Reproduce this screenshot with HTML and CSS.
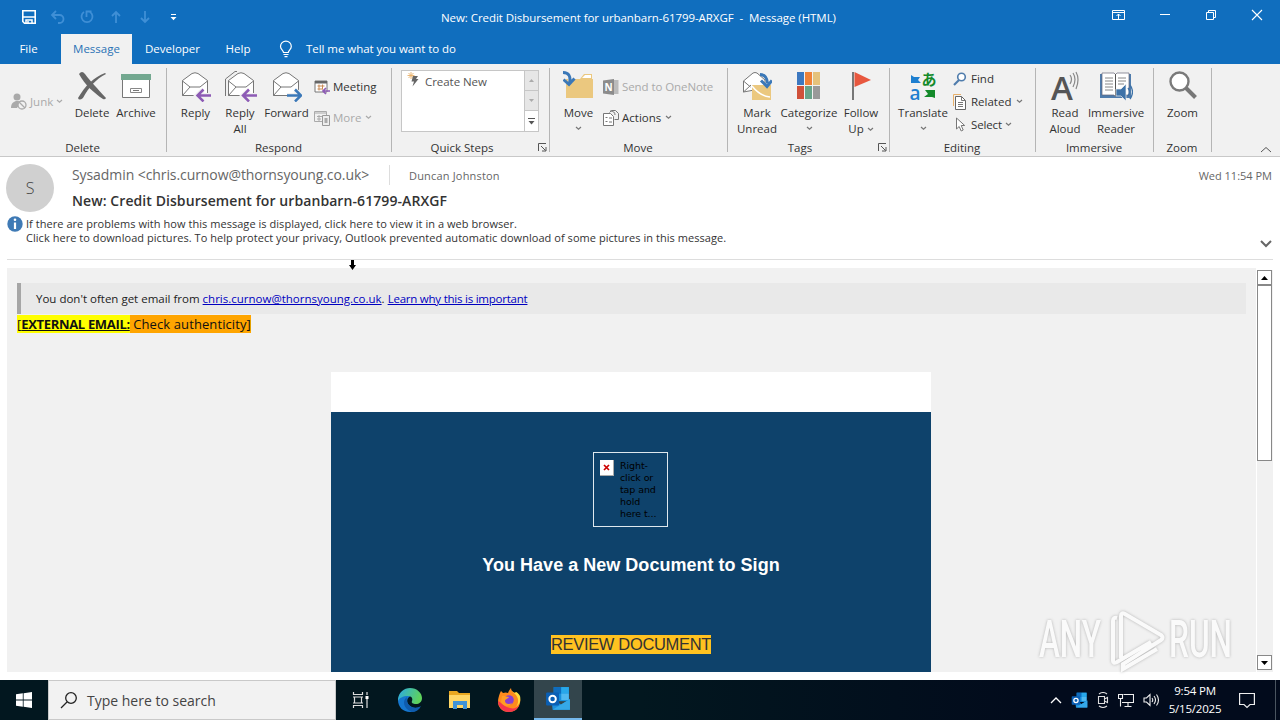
FILE: index.html
```html
<!DOCTYPE html>
<html>
<head>
  <meta charset="utf-8">
  <title>New: Credit Disbursement for urbanbarn-61799-ARXGF - Message (HTML)</title>
  <link rel="stylesheet" href="styles.css">
</head>
<body>
  <!-- icons used more than once -->
  <svg class="defs" width="0" height="0">
    <symbol id="caret" viewBox="0 0 7 5"><path d="M1 1l2.500 2.300L6 1" fill="none" stroke="currentColor" stroke-width="1.200"/></symbol>
    <symbol id="launcher" viewBox="0 0 9 9"><path d="M.5 8V.5H8M3 3l4.500 4.500M8 4v4H4" fill="none" stroke="#555"/></symbol>
    <symbol id="envelope" viewBox="0 0 28 28"><path d="M1.500 9.500L11 2.500q3-1.500 6 0l9.500 7v15h-25z" fill="#fff" stroke="#777"/><path d="M1.500 10l7.500 6h10l7.500-6M1.500 24.500L9 16" fill="none" stroke="#777"/></symbol>
    <symbol id="outlook" viewBox="0 0 24 24"><rect x="8" y="1" width="14" height="13" fill="#1490df"/><path d="M8 1h7v6H8z" fill="#0f6cbd"/><path d="M15 1h7v6h-7z" fill="#28a8ea"/><path d="M15 7h7v6h-7z" fill="#50b9f0"/><path d="M6 12l9 5 8-5v10H7z" fill="#1d8fdc"/><path d="M23 12v10H7z" fill="#35a8e8"/><rect x="1" y="6" width="12" height="12" rx="1" fill="#0a5fb4"/><circle cx="7" cy="12" r="3" fill="none" stroke="#fff" stroke-width="1.800"/></symbol>
  </svg>

  <div class="titlebar">
    <div class="quick-access">
      <svg width="16" height="16" viewBox="0 0 16 16"><path d="M1.800 1.800h12.400v12.400H3.500L1.800 12.500z" fill="none" stroke="#fff" stroke-width="1.600"/><path d="M2 8h12M5 14v-3h6v3M7 12v2" fill="none" stroke="#fff" stroke-width="1.500"/></svg>
      <svg class="dim" width="16" height="16" viewBox="0 0 16 16"><path d="M6 2L2 6l4 4M2 6h7.500a4 4 0 0 1 0 8H8" fill="none" stroke="currentColor" stroke-width="1.800"/></svg>
      <svg class="dim" width="16" height="16" viewBox="0 0 16 16"><path d="M5 3a5.500 5.500 0 1 0 6 0M7.500 8V2.500h5" fill="none" stroke="currentColor" stroke-width="1.800"/></svg>
      <svg class="dim" width="16" height="16" viewBox="0 0 16 16"><path d="M8 14V3M4 7l4-4 4 4" fill="none" stroke="currentColor" stroke-width="1.800"/></svg>
      <svg class="dim" width="16" height="16" viewBox="0 0 16 16"><path d="M8 2v11M4 9l4 4 4-4" fill="none" stroke="currentColor" stroke-width="1.800"/></svg>
      <svg width="16" height="16" viewBox="0 0 16 16"><path d="M5 5.500h5" stroke="#fff"/><path d="M4.500 8h6l-3 3.200z" fill="#fff"/></svg>
    </div>
    <div class="window-title">New: Credit Disbursement for urbanbarn-61799-ARXGF&nbsp; -&nbsp; Message (HTML)</div>
    <div class="window-buttons">
      <svg width="14" height="12" viewBox="0 0 14 12"><path d="M.5 1.500h12v9H.5zM.5 3.500h12M6.500 10V5M4.500 7l2-2 2 2" fill="none" stroke="#fff"/></svg>
      <svg width="12" height="12" viewBox="0 0 12 12"><path d="M1 5.500h10" stroke="#fff"/></svg>
      <svg width="12" height="12" viewBox="0 0 12 12"><path d="M1.500 3.500h7v7h-7zM3.500 3.500v-2h7v7h-2" fill="none" stroke="#fff"/></svg>
      <svg width="12" height="12" viewBox="0 0 12 12"><path d="M1 1l10 10M11 1L1 11" stroke="#fff" stroke-width="1.100"/></svg>
    </div>
  </div>

  <div class="tabs">
    <div class="tab tab-file">File</div>
    <div class="tab active">Message</div>
    <div class="tab tab-dev">Developer</div>
    <div class="tab tab-help">Help</div>
    <svg class="bulb" width="14" height="18" viewBox="0 0 14 18"><path d="M4.500 12.500c0-2-3-3-3-6a5.300 5.300 0 0 1 10.800 0c0 3-3 4-3 6zM4.500 14.500h5M5.500 16.700h3" fill="none" stroke="#fff" stroke-width="1.200"/></svg>
    <div class="tell-me">Tell me what you want to do</div>
  </div>

  <div class="ribbon">
    <div class="group g-delete">
      <div class="group-body">
        <div class="junk disabled">
          <svg width="16" height="17" viewBox="0 0 16 17"><circle cx="6" cy="4" r="3.500" fill="#aaa"/><path d="M0 15c0-5 3-7 6-7 2 0 3 .5 4 1l-4 6z" fill="#aaa"/><circle cx="11" cy="12" r="4" fill="#f1f1f1" stroke="#aaa" stroke-width="1.300"/><path d="M8 9l6 6" stroke="#aaa" stroke-width="1.300"/></svg>
          <span>Junk</span><svg class="caret" width="7" height="5"><use href="#caret"/></svg>
        </div>
        <div class="big w44">
          <svg width="30" height="32" viewBox="0 0 30 32"><path d="M2 4q3-4 6 0c6 8 12 14 21 24q-1 2-3 1C17 23 8 15 2 4z" fill="#666"/><path d="M29 4C19 9 12 17 6 28q-4 3-5 0C8 16 17 7 28 3z" fill="#666"/></svg>
          <span>Delete</span>
        </div>
        <div class="big w44">
          <svg width="30" height="32" viewBox="0 0 30 32"><path d="M1.500 9h27v18.500h-27z" fill="#fff" stroke="#777"/><path d="M0 4h30v6H0z" fill="#73a890"/><path d="M9.500 18.500h11v4h-11z" fill="#fff" stroke="#888"/><path d="M12 20.500h6" stroke="#777"/></svg>
          <span>Archive</span>
        </div>
      </div>
      <div class="group-label">Delete</div>
    </div>

    <div class="group g-respond">
      <div class="group-body">
        <div class="big w45">
          <svg width="30" height="32" viewBox="0 0 30 32"><use href="#envelope" x="0" y="1" width="28" height="28"/><path d="M30 25.500H17M22 20l-6 5.500 6 5.500" fill="none" stroke="#f1f1f1" stroke-width="5"/><path d="M31 25.500H17M22.500 19.500l-6 6 6 6" fill="none" stroke="#8d5bb5" stroke-width="2.500"/></svg>
          <span>Reply</span>
        </div>
        <div class="big w44">
          <svg width="33" height="32" viewBox="0 0 33 32"><path d="M1.500 26V9L11 1.500h2" fill="none" stroke="#777"/><use href="#envelope" x="3" y="1" width="28" height="28"/><path d="M32 25.500H19M25 20l-6 5.500 6 5.500" fill="none" stroke="#f1f1f1" stroke-width="5"/><path d="M33 25.500H19M25 19.500l-6 6 6 6" fill="none" stroke="#8d5bb5" stroke-width="2.500"/></svg>
          <span>Reply<br>All</span>
        </div>
        <div class="big w49">
          <svg width="30" height="32" viewBox="0 0 30 32"><use href="#envelope" x="0" y="1" width="28" height="28"/><path d="M15 25.500h13M23 20l6 5.500-6 5.500" fill="none" stroke="#f1f1f1" stroke-width="5"/><path d="M15 25.500h13M23 19.500l6 6-6 6" fill="none" stroke="#3b78b8" stroke-width="2.500"/></svg>
          <span>Forward</span>
        </div>
        <div class="small-col two">
          <div class="small">
            <svg width="16" height="16" viewBox="0 0 16 16"><path d="M1 2h12v11H1z" fill="#fff" stroke="#777"/><path d="M1 2h12v2.500H1z" fill="#666"/><path d="M3.500 7h7M3.500 10h5M5 5.500v6M8.500 5.500v5" stroke="#c98a55"/><path d="M16 12H9M12 9l-3 3 3 3" fill="none" stroke="#8d5bb5" stroke-width="1.700"/></svg>
            <span>Meeting</span>
          </div>
          <div class="small disabled">
            <svg width="16" height="16" viewBox="0 0 16 16"><path d="M.5 1.500h12v10H.5z" fill="none" stroke="#aaa"/><path d="M.5 3h12M3 6.500h5M3 9h4M5 5v6" stroke="#aaa"/><path d="M8.500 5.500h7v10h-7z" fill="#eee" stroke="#999"/><path d="M10.500 8h3v5h-3z" fill="#aaa"/></svg>
            <span>More</span><svg class="caret" width="7" height="5"><use href="#caret"/></svg>
          </div>
        </div>
      </div>
      <div class="group-label">Respond</div>
    </div>

    <div class="group g-quick">
      <div class="group-body">
        <div class="gallery">
          <div class="gallery-list">
            <svg width="13" height="17" viewBox="0 0 13 17"><path d="M4 1v7M.5 4.500h7M1.500 2l5 5M6.500 2l-5 5" stroke="#e8b06a" stroke-width=".9"/><path d="M6 5h5L9 8h2.500L5.500 15.500 7 10.500H4.500z" fill="#666"/></svg>
            <span>Create New</span>
          </div>
          <div class="gallery-scroll">
            <div class="g-btn off"><svg width="5" height="3"><path d="M0 3h5L2.500 0z" fill="#aaa"/></svg></div>
            <div class="g-btn off"><svg width="5" height="3"><path d="M0 0h5L2.500 3z" fill="#aaa"/></svg></div>
            <div class="g-btn"><svg width="7" height="7"><path d="M0 .5h7" stroke="#555"/><path d="M.5 3h6l-3 3.500z" fill="#555"/></svg></div>
          </div>
        </div>
      </div>
      <div class="group-label">Quick Steps</div>
      <svg class="launcher" width="9" height="9"><use href="#launcher"/></svg>
    </div>

    <div class="group g-move">
      <div class="group-body">
        <div class="big w45">
          <svg width="31" height="32" viewBox="0 0 31 32"><path d="M3 9h14l4-5h8v5h1v19H3z" fill="#ebc87f"/><path d="M19 8l3-3h6v3z" fill="#fff"/><path d="M0 0c7-1 10 4 7 12" fill="none" stroke="#f1f1f1" stroke-width="5"/><path d="M0 2.500c6 0 8 4 6.500 11M.5 9.500l5.500 5 5.500-6" fill="none" stroke="#3b78b8" stroke-width="3"/></svg>
          <span>Move</span><svg class="caret" width="7" height="5"><use href="#caret"/></svg>
        </div>
        <div class="small-col two">
          <div class="small disabled">
            <svg width="16" height="16" viewBox="0 0 16 16"><path d="M9 1h6.500v14H9z" fill="#bbb"/><path d="M0 1.500L11 0v16L0 14.500z" fill="#8c8c8c"/><text class="n-mark" x="1.500" y="12">N</text></svg>
            <span class="onenote">Send to OneNote</span>
          </div>
          <div class="small">
            <svg width="16" height="16" viewBox="0 0 16 16"><path d="M.5 3.500h7l3 3v9H.5z" fill="#fff" stroke="#777"/><path d="M2.500 7.500h2M2.500 11.500h2M6 8h3M6 12h3" stroke="#777"/><path d="M6.500 2.500l2-2h4l3 3v6h-4M7 1q5 0 5 4" fill="none" stroke="#777"/></svg>
            <span>Actions</span><svg class="caret" width="7" height="5"><use href="#caret"/></svg>
          </div>
        </div>
      </div>
      <div class="group-label">Move</div>
    </div>

    <div class="group g-tags">
      <div class="group-body">
        <div class="big w46">
          <svg width="30" height="32" viewBox="0 0 30 32"><path d="M1.500 22V11L11 3q2-1 4 0l8 7v8z" fill="#fff" stroke="#777"/><path d="M1.500 11l7 6M1.500 22L9 15" fill="none" stroke="#777"/><path d="M10 15h19v15H10z" fill="#ebc87f"/><path d="M10 16q8 10 18 11" fill="none" stroke="#fff" stroke-width="1.500"/><path d="M18 4.500q7 0 7.500 9M19 10.500l6 6 5-6" fill="none" stroke="#3b78b8" stroke-width="3"/></svg>
          <span>Mark<br>Unread</span>
        </div>
        <div class="big w58">
          <svg width="24" height="32" viewBox="0 0 24 32"><path d="M0 2h7v13H0z" fill="#3c78c0"/><path d="M8 2h7v13H8z" fill="#ef8238"/><path d="M16 2h7v13h-7z" fill="#e5c27b"/><path d="M0 16h7v13H0z" fill="#cf5039"/><path d="M8 16h7v13H8z" fill="#68a389"/><path d="M16 16h7v13h-7z" fill="#999"/></svg>
          <span>Categorize</span><svg class="caret" width="7" height="5"><use href="#caret"/></svg>
        </div>
        <div class="big w46">
          <svg width="20" height="32" viewBox="0 0 20 32"><path d="M2 2v28" stroke="#777" stroke-width="2"/><path d="M3.500 2L20 10 3.500 17z" fill="#e8583f"/></svg>
          <span>Follow<br>Up <svg class="caret" width="7" height="5"><use href="#caret"/></svg></span>
        </div>
      </div>
      <div class="group-label">Tags</div>
      <svg class="launcher" width="9" height="9"><use href="#launcher"/></svg>
    </div>

    <div class="group g-editing">
      <div class="group-body">
        <div class="big w54">
          <div class="translate-icon">
            <svg width="11" height="9" viewBox="0 0 11 9"><path d="M1 0l3 2h6L8 5l3 3H1z" fill="#1e7fd0"/></svg>
            <b class="hira">あ</b>
            <b class="lat">a</b>
            <svg width="12" height="9" viewBox="0 0 12 9"><path d="M12 9l-3-1H1l4-3-3-4h10z" fill="#148a2a"/></svg>
          </div>
          <span>Translate</span><svg class="caret" width="7" height="5"><use href="#caret"/></svg>
        </div>
        <div class="small-col three">
          <div class="small">
            <svg width="14" height="14" viewBox="0 0 14 14"><circle cx="8.500" cy="5" r="3.800" fill="#fff" stroke="#4f7cac" stroke-width="1.600"/><path d="M6 8l-5 5" stroke="#4f7cac" stroke-width="2.200"/></svg>
            <span>Find</span>
          </div>
          <div class="small">
            <svg width="14" height="16" viewBox="0 0 14 16"><path d="M.5 12V.5H8" fill="none" stroke="#e8b06a"/><path d="M2.500 2.500h6l4 4v9h-10z" fill="#fff" stroke="#666"/><path d="M8.500 2.500v4h4M5 8.500h5M5 10.500h5M5 12.500h5" fill="none" stroke="#777"/></svg>
            <span>Related</span><svg class="caret" width="7" height="5"><use href="#caret"/></svg>
          </div>
          <div class="small">
            <svg width="14" height="15" viewBox="0 0 14 15"><path d="M3.500 1v11l2.700-2.500 2 4.500 2-1-2-4.500h3.500z" fill="#fff" stroke="#777"/></svg>
            <span class="select">Select</span><svg class="caret caret-select" width="7" height="5"><use href="#caret"/></svg>
          </div>
        </div>
      </div>
      <div class="group-label">Editing</div>
    </div>

    <div class="group g-immersive">
      <div class="group-body">
        <div class="big w46">
          <svg width="30" height="32" viewBox="0 0 30 32"><text class="a-mark" x="1" y="30">A</text><path d="M20 5q3 4 0 9M23 3q4 6 0 14M26 2q4 7 0 17" fill="none" stroke="#888" stroke-width="1.200"/></svg>
          <span>Read<br>Aloud</span>
        </div>
        <div class="big w56">
          <svg width="33" height="32" viewBox="0 0 33 32"><path d="M0 4h31v24H0z" fill="#4f7cac"/><path d="M2 3h12l1.500 1.500L17 3h12v22H17l-1.500 1.500L14 25H2z" fill="#fff" stroke="#667" stroke-width=".7"/><path d="M15.500 4v22" stroke="#555"/><path d="M5 8h8M5 11h8M5 14h8M5 17h8M5 20h8M18 8h8M18 11h8M18 14h6" stroke="#888"/><path d="M16 19h5l5-5v17l-5-5h-5z" fill="#3d72a8" stroke="#f1f1f1" stroke-width=".7"/><path d="M28 18q3 4 0 8M30 15q5 7 0 14" fill="none" stroke="#3d72a8" stroke-width="1.300"/></svg>
          <span>Immersive<br>Reader</span>
        </div>
      </div>
      <div class="group-label">Immersive</div>
    </div>

    <div class="group g-zoom">
      <div class="group-body">
        <div class="big w45">
          <svg width="28" height="32" viewBox="0 0 28 32"><circle cx="10.500" cy="11.500" r="9" fill="#fff" stroke="#7a7a7a" stroke-width="2.400"/><path d="M17 18l9.500 9.500" stroke="#777" stroke-width="4"/></svg>
          <span>Zoom</span>
        </div>
      </div>
      <div class="group-label">Zoom</div>
    </div>
    <svg class="collapse" width="12" height="7" viewBox="0 0 12 7"><path d="M1 6l5-4.500L11 6" fill="none" stroke="#555"/></svg>
  </div>

  <div class="mail-header">
    <div class="avatar">S</div>
    <div class="mail-meta">
      <div class="people">
        <div class="from">Sysadmin &lt;chris.curnow@thornsyoung.co.uk&gt;</div>
        <div class="to">Duncan Johnston</div>
        <div class="date">Wed 11:54 PM</div>
      </div>
      <div class="subject">New: Credit Disbursement for urbanbarn-61799-ARXGF</div>
    </div>
  </div>
  <div class="infobar">
    <svg width="16" height="16" viewBox="0 0 16 16"><circle cx="8" cy="8" r="7.700" fill="#3f7ab5"/><path d="M8 6.500V13" stroke="#fff" stroke-width="2.200"/><circle cx="8" cy="3.800" r="1.300" fill="#fff"/></svg>
    <div class="info-text">
      <div class="info1">If there are problems with how this message is displayed, click here to view it in a web browser.</div>
      <div class="info2">Click here to download pictures. To help protect your privacy, Outlook prevented automatic download of some pictures in this message.</div>
    </div>
    <svg class="expand" width="12" height="8" viewBox="0 0 12 8"><path d="M1 1l5 5 5-5" fill="none" stroke="#666" stroke-width="2"/></svg>
  </div>

  <div class="reading">
    <div class="mail-body">
      <div class="safety">You don't often get email from <a>chris.curnow@thornsyoung.co.uk</a>. <a class="learn">Learn why this is important</a></div>
      <div class="external"><span class="yellow">[<b>EXTERNAL EMAIL:</b></span><span class="orange"> Check authenticity]</span></div>
      <div class="card">
        <div class="card-main">
          <div class="blocked">
            <svg width="14" height="16" viewBox="0 0 14 16"><path d="M0 0h14v16H0z" fill="#aaa"/><path d="M0 0h13v15H0z" fill="#fff"/><path d="M4 5l5 5M9 5l-5 5" stroke="#c00" stroke-width="1.700"/></svg>
            <span>Right-<br>click or<br>tap and<br>hold<br>here t...</span>
          </div>
          <div class="headline">You Have a New Document to Sign</div>
          <div class="review"><span>REVIEW DOCUMENT</span></div>
        </div>
      </div>
    </div>
    <div class="scrollbar">
      <div class="sb-btn"><svg width="7" height="4"><path d="M0 4h7L3.500 0z"/></svg></div>
      <div class="thumb"></div>
      <div class="sb-btn sb-down"><svg width="7" height="4"><path d="M0 0h7L3.500 4z"/></svg></div>
    </div>
  </div>

  <div class="taskbar">
    <div class="start"><svg width="16" height="16" viewBox="0 0 16 16"><path d="M0 2.300L6.800 1.300v6.300H0zM7.600 1.200L16 0v7.600H7.600zM0 8.400h6.800v6.300L0 13.700zM7.600 8.400H16V16l-8.400-1.200z" fill="#fff"/></svg></div>
    <div class="search">
      <svg width="18" height="18" viewBox="0 0 18 18"><circle cx="11" cy="7" r="5.300" fill="none" stroke="#222" stroke-width="1.300"/><path d="M7 11l-6 6" stroke="#222" stroke-width="1.300"/></svg>
      <span>Type here to search</span>
    </div>
    <div class="task"><svg width="18" height="16" viewBox="0 0 18 16"><path d="M1.500 0v2.500h9V0M1.500 16v-2.500h9V16M1 5h10M1 11h10M2.500 5v6M9.500 5v6M15 0v3M15 7v9" fill="none" stroke="#ddd" stroke-width="1.200"/><path d="M13.500 4h3v3h-3z" fill="#fff"/></svg></div>
    <div class="task">
      <svg width="24" height="24" viewBox="0 0 24 24"><defs><linearGradient id="edge-top" x1="0" y1="0" x2="1" y2=".3"><stop offset="0" stop-color="#2aa9e8"/><stop offset="1" stop-color="#5ed25c"/></linearGradient></defs><path d="M0 12C1 6 5 4 9 5l4 3c-4 1-5 6-2 9 3 3 7 4 11 2-2 3-6 5-10 5C5 24 0 19 0 12z" fill="#1577cf"/><path d="M0 11C1 4 6 0 12 0c7 0 12 5 12 10 0 4-3 6-6 6-3 0-5-1-4-3 1-2 0-5-4-5-5 0-9 2-10 5z" fill="url(#edge-top)"/><path d="M9 9c-5 3-4 12 5 15 4 0 7-2 9-6-3 2-7 2-9 1-4-1-6-6-5-10z" fill="#0f5cad"/></svg>
    </div>
    <div class="task">
      <svg width="22" height="20" viewBox="0 0 22 20"><path d="M0 1h8l2 2h11v15H0z" fill="#e9a820"/><path d="M0 5h21v13H0z" fill="#ffd766"/><path d="M4 19v-8h14v8h-4v-4H8v4z" fill="#3f93d6"/></svg>
    </div>
    <div class="task">
      <svg width="24" height="24" viewBox="0 0 24 24"><path d="M3 5l1-2 2 2q3-1 5 0 1-3 3-5c0 3 2 4 4 5l1-1c3 3 5 6 4 11-1 5-5 9-11 9C5 24 1 19 1 14c0-4 1-6 2-9z" fill="#ff8a1d"/><path d="M14 0c0 3 2 4 4 6 4 4 4 9 1 13 4-3 5-7 4-11-1-2-2-3-4-4l-1 1c-2-1-4-2-4-5z" fill="#ffdc3e"/><path d="M1 13c0 6 5 11 11 11 5 0 9-3 10-7-2 3-5 4-9 3-5-1-7-4-12-7z" fill="#f5354c"/><circle cx="12" cy="12" r="4.800" fill="#8a3fd0"/><path d="M5 8c3-1 4 1 7 1-1 2-4 2-4 4 0 3 4 4 7 2-2 4-9 4-11-1z" fill="#ff9d25"/></svg>
    </div>
    <div class="task current"><svg width="26" height="26"><use href="#outlook"/></svg></div>
    <div class="tray">
      <svg width="12" height="8" viewBox="0 0 12 8"><path d="M1 7l5-5 5 5" fill="none" stroke="#fff" stroke-width="1.300"/></svg>
      <svg width="17" height="17"><use href="#outlook"/></svg>
      <svg width="12" height="16" viewBox="0 0 12 16"><path d="M1.500 4.500h6v7h-6zM7.500 7l3-1.500v5L7.500 9M2 2q4-3 8 0M2 14q4 3 8 0" fill="none" stroke="#ddd" stroke-width="1.100"/></svg>
      <svg width="16" height="15" viewBox="0 0 16 15"><path d="M5.500 1.500h10v8H4M10 9.500v4M6.500 13.500h7M.5 1.500h4v4h-4zM2.500 5.500v8" fill="none" stroke="#eee" stroke-width="1.100"/></svg>
      <svg width="17" height="14" viewBox="0 0 17 14"><path d="M1 5h2.500L7 1.500v11L3.500 9H1zM9 5q1.500 2 0 4M11 3q3 4 0 8M13.500 1.500q4 5.500 0 11" fill="none" stroke="#eee" stroke-width="1.100"/></svg>
    </div>
    <div class="clock"><div class="time">9:54 PM</div><div class="day">5/15/2025</div></div>
    <svg class="notify" width="16" height="17" viewBox="0 0 16 17"><path d="M.6 1.500h14.800v11H11l-3 3-3-3H.6z" fill="none" stroke="#eee" stroke-width="1.200"/></svg>
    <div class="peek"></div>
  </div>

  <svg class="pointer" width="8" height="10" viewBox="0 0 8 10"><path d="M3 0h3v5h2L4.500 10 1 5h2z"/></svg>

  <svg class="watermark" width="243" height="70" viewBox="0 0 243 70">
    <text x="2" y="50" textLength="62" lengthAdjust="spacingAndGlyphs">ANY</text>
    <path d="M80 11q-4-1-4 3v40q0 3 4 1l34-20M84 34V9q0-4 4-2l36 21q3 3 0 5L86 57v5l34-20M84 20v31" fill="none"/>
    <text x="132" y="50" textLength="63" lengthAdjust="spacingAndGlyphs">RUN</text>
  </svg>
</body>
</html>
```

FILE: styles.css
```css
* { box-sizing: border-box; }
body {
  margin: 0;
  width: 1280px;
  height: 720px;
  overflow: hidden;
  position: relative;
  display: flex;
  flex-direction: column;
  background: #fff;
  font-family: "Open Sans", "Noto Sans", sans-serif;
  font-size: 11.5px;
  color: #333;
}
svg { display: block; flex: none; }
.defs { position: absolute; }
span, div { white-space: nowrap; }

/* title bar */
.titlebar { height: 34px; background: #106ebe; color: #fff; display: flex; align-items: center; flex: none; }
.quick-access { display: flex; gap: 13px; padding-left: 21px; width: 441px; }
.dim { color: #3f8fd6; }
.window-title { flex: 1; letter-spacing: -.06px; }
.window-buttons { display: flex; gap: 34px; padding: 0 17px 4px 0; }
.window-buttons svg:first-child { margin-right: -1px; }

.tabs { height: 30px; background: #106ebe; color: #fff; display: flex; flex: none; align-items: center; }
.tab { height: 30px; line-height: 30px; text-align: center; }
.tab-file { width: 61px; padding-right: 4px; }
.active { width: 71px; background: #f1f1f1; color: #2a72b5; }
.tab-dev { width: 81px; }
.tab-help { width: 50px; }
.bulb { margin-left: 16px; }
.tell-me { margin: -1px 0 0 13px; letter-spacing: -.05px; }

/* ribbon */
.ribbon { height: 93px; background: #f1f1f1; border-bottom: 1px solid #c8c8c8; display: flex; flex: none; position: relative; }
.group { display: flex; flex-direction: column; position: relative; padding-left: 6px; }
.group::after { content: ""; position: absolute; right: 0; top: 4px; height: 84px; border-right: 1px solid #b5b5b5; }
.g-delete { width: 167px; padding-left: 0; }
.g-respond { width: 225px; }
.g-quick { width: 158px; }
.g-move { width: 178px; }
.g-tags { width: 162px; }
.g-editing { width: 146px; }
.g-immersive { width: 118px; }
.g-zoom { width: 58px; }
.group-body { height: 76px; display: flex; }
.group-label { line-height: 16px; text-align: center; margin-left: -6px; padding-right: 2px; }
.g-delete .group-label { margin-left: 0; }
.g-quick .group-label { padding-right: 18px; }
.g-tags .group-label { padding-right: 18px; }
.launcher { position: absolute; right: 3px; bottom: 4px; }

.big { display: flex; flex-direction: column; align-items: center; padding-top: 6px; }
.big > span { line-height: 16px; text-align: center; margin-top: 3px; }
.big > .caret { margin-top: 5px; }
.big span .caret { display: inline-block; vertical-align: middle; }
.caret { color: #777; }
.w44 { width: 44px; }
.w45 { width: 45px; }
.w46 { width: 46px; }
.w49 { width: 49px; }
.w54 { width: 54px; }
.w56 { width: 56px; }
.w58 { width: 58px; }

.disabled { color: #aaa; }
.disabled .caret { color: #aaa; }
.junk { width: 70px; padding: 0 0 2px 11px; display: flex; align-items: center; gap: 3px; }
.small-col { display: flex; flex-direction: column; padding-left: 3px; }
.small { display: flex; align-items: center; gap: 3px; }
.small .caret { margin-left: 1px; }
.two { padding-top: 7px; }
.two .small { height: 31px; }
.three { padding-top: 3px; }
.three .small { height: 23px; gap: 4px; }
.select { letter-spacing: -.15px; }
.small .caret-select { margin-left: -1px; }
.onenote { letter-spacing: -.08px; }
.n-mark { font: 700 10px "Open Sans", sans-serif; fill: #fff; }
.a-mark { font: 600 33px "Open Sans", sans-serif; fill: #555; }
.g-move .small-col { padding-left: 2px; }

.gallery { display: flex; width: 138px; height: 62px; margin: 6px 0 0 3px; border: 1px solid #c6c6c6; background: #fff; }
.gallery-list { flex: 1; display: flex; gap: 5px; padding-left: 5px; line-height: 22px; align-items: flex-start; color: #555; letter-spacing: -.05px; }
.gallery-scroll { width: 14px; border-left: 1px solid #c6c6c6; }
.g-btn { height: 20px; display: flex; align-items: center; justify-content: center; border-bottom: 1px solid #c6c6c6; }
.g-btn:last-child { border-bottom: 0; }
.off { background: #e6e6e6; }

.translate-icon { width: 28px; height: 32px; padding: 2px 0; display: grid; grid-template-columns: 12px 16px; grid-template-rows: 14px 14px; align-items: center; justify-items: center; }
.hira { font: 700 15px/14px "Noto Sans CJK JP", sans-serif; color: #148a2a; }
.lat { font-size: 19px; line-height: 14px; font-weight: 600; color: #1e7fd0; }
.collapse { position: absolute; right: 8px; bottom: 3px; }

/* message header */
.mail-header { display: flex; height: 59px; flex: none; padding: 7px 8px 0 6px; }
.avatar { width: 48px; height: 48px; border-radius: 50%; background: #d0d0d0; color: #444; font-size: 16px; font-weight: 300; line-height: 48px; text-align: center; }
.mail-meta { flex: 1; padding-left: 18px; }
.people { display: flex; height: 22px; align-items: center; color: #666; }
.from { width: 318px; font-size: 14px; letter-spacing: -.08px; border-right: 1px solid #ddd; line-height: 20px; }
.to { flex: 1; padding-left: 19px; font-size: 11px; letter-spacing: .18px; }
.date { font-size: 11px; }
.subject { font-size: 14px; font-weight: 600; line-height: 29px; letter-spacing: .08px; color: #333; }
.infobar { display: flex; height: 44px; flex: none; margin: 0 7px; border-bottom: 1px solid #ddd; font-size: 11px; line-height: 14px; letter-spacing: .045px; }
.info-text { flex: 1; padding: 1px 0 0 3px; }
.expand { margin: 24px 1px 0 0; }

/* reading pane */
.reading { display: flex; height: 412px; flex: none; margin: 8px 0 0 7px; }
.mail-body { width: 1249px; height: 404px; background: #f1f1f1; padding: 15px 10px 0; overflow: hidden; }
.safety { height: 31px; line-height: 31px; border-left: 4px solid #a6a6a6; background: #e9e9e9; padding-left: 15px; color: #222; }
.safety a { color: #0000c0; text-decoration: underline; }
.safety .learn { letter-spacing: -.23px; }
.external { line-height: 18px; margin-top: 1px; font-size: 13px; color: #111; display: flex; }
.external b { text-decoration: underline; letter-spacing: -.33px; }
.yellow { background: #ff0; }
.orange { background: #ffa500; white-space: pre; letter-spacing: .1px; }
.card { width: 600px; margin: 39px 0 0 314px; padding-top: 40px; background: #fff; }
.card-main { height: 260px; background: #0e426b; display: flex; flex-direction: column; align-items: center; padding-top: 40px; font-family: "Liberation Sans", Arial, sans-serif; }
.blocked { width: 75px; height: 75px; border: 1px solid #dfe8ee; display: flex; gap: 6px; padding: 7px 6px; color: #000; font: 9.5px/12px "DejaVu Sans", sans-serif; letter-spacing: -.1px; margin-right: 1px; }
.headline { color: #fff; font-size: 18px; font-weight: 700; line-height: 22px; margin-top: 27px; letter-spacing: .02px; }
.review { margin-top: 59px; font-size: 16.5px; line-height: 19px; letter-spacing: -.33px; color: #333; }
.review span { background: #ffc220; display: block; }

.scrollbar { width: 16px; height: 402px; margin: 2px 0 0 1px; display: flex; flex-direction: column; background: #f1f1f1; }
.sb-btn { height: 15px; width: 15px; border: 1px solid #888; background: #fff; display: flex; align-items: center; justify-content: center; }
.thumb { width: 15px; height: 176px; border: 1px solid #888; background: #fff; }
.sb-down { margin-top: auto; margin-bottom: 2px; }

/* taskbar */
.taskbar { height: 40px; flex: none; margin-top: auto; display: flex; background: linear-gradient(90deg, #02171f 0%, #02171f 50%, #020b1c 80%); color: #fff; }
.start { width: 48px; display: flex; align-items: center; justify-content: center; }
.search { width: 288px; background: #f2f2f2; border: 1px solid #c9c9c9; color: #444; display: flex; align-items: center; gap: 9px; padding-left: 11px; font-size: 14px; }
.task { width: 49.5px; display: flex; align-items: center; justify-content: center; }
.current { background: #33454c; border-bottom: 2px solid #76b9ed; width: 48px; }
.tray { margin-left: auto; display: flex; align-items: center; gap: 9px; }
.clock { width: 70px; text-align: center; line-height: 18px; padding-top: 2px; letter-spacing: -.2px; }
.notify { margin: 12px 20px 0 9px; }
.peek { width: 5px; border-left: 1px solid #4a5560; }

.pointer { position: absolute; left: 348px; top: 260px; }
.watermark { position: absolute; left: 1037px; top: 607px; filter: drop-shadow(0 0 1.5px #999); opacity: .7; }
.watermark text { font: 500 51px Roboto, sans-serif; fill: #fff; }
.watermark path { stroke: #fff; stroke-width: 4; }
```
